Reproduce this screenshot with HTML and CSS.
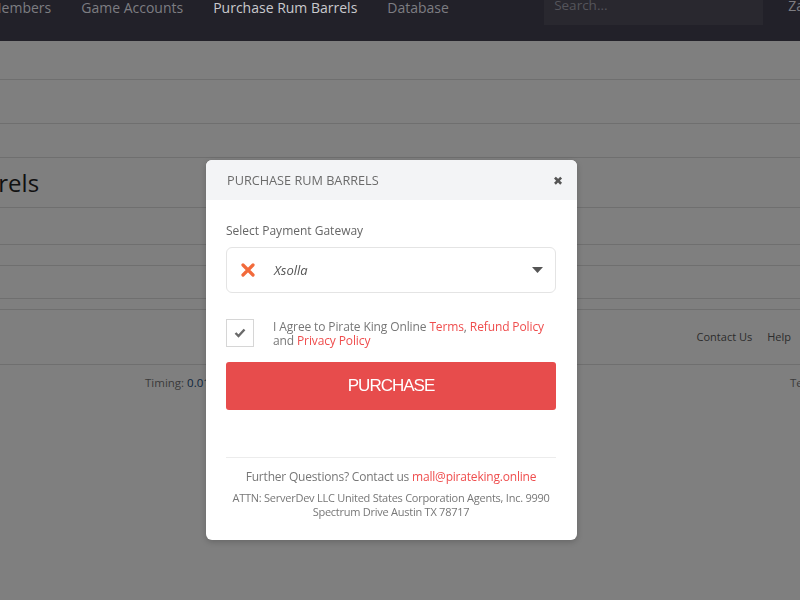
FILE: index.html
```html
<!DOCTYPE html>
<html lang="en">
<head>
    <meta charset="UTF-8">
    <meta name="viewport" content="width=device-width, initial-scale=1.0">
    <title>Purchase Rum Barrels</title>
    <link rel="stylesheet" href="styles.css">
</head>
<body>
    <nav class="topbar">
        <ul class="menu">
            <li><a href="#">Members</a></li>
            <li><a href="#">Game Accounts</a></li>
            <li><a href="#" class="active">Purchase Rum Barrels</a></li>
            <li><a href="#">Database</a></li>
        </ul>
        <input type="text" class="search" placeholder="Search...">
        <a href="#" class="user">Zack</a>
    </nav>

    <div class="page">
        <div class="row r1"></div>
        <div class="row r2"></div>
        <div class="row r3"></div>
        <div class="row r4"><h1>Purchase Rum Barrels</h1></div>
        <div class="row r5"></div>
        <div class="row r6"></div>
        <div class="row r7"></div>
        <div class="row r8"></div>
        <div class="row r9">
            <a href="#">Contact Us</a>
            <a href="#">Help</a>
        </div>
        <div class="stats">
            <span class="timing">Timing: <b>0.01</b></span>
            <span class="terms">Terms</span>
        </div>
    </div>

    <div class="backdrop"></div>

    <div class="modal">
        <div class="modal-head">
            <span>Purchase Rum Barrels</span>
            <span class="close">&#10006;</span>
        </div>
        <div class="modal-body">
            <label>Select Payment Gateway</label>
            <div class="gateway">
                <svg class="x-icon" width="14" height="14" viewBox="0 0 14 14">
                    <path d="M2 2 L12 12 M12 2 L2 12" stroke="#f26a3b" stroke-width="3.2" stroke-linecap="round"/>
                </svg>
                <span class="gw-name">Xsolla</span>
                <svg class="caret" width="11" height="6" viewBox="0 0 11 6">
                    <path d="M0 0 H11 L5.5 6 Z" fill="#555"/>
                </svg>
            </div>
            <div class="agree">
                <div class="checkbox">
                    <svg width="12" height="10" viewBox="0 0 12 10">
                        <path d="M1.5 5 L4.5 8 L10.5 1.5" stroke="#6a6a6a" stroke-width="2.4" fill="none"/>
                    </svg>
                </div>
                <p>I Agree to Pirate King Online <a href="#">Terms</a>, <a href="#">Refund Policy</a> and <a href="#">Privacy Policy</a></p>
            </div>
            <button type="button" class="buy">PURCHASE</button>
            <hr>
            <p class="contact">Further Questions? Contact us <a href="#">mall@pirateking.online</a></p>
            <p class="attn">ATTN: ServerDev LLC United States Corporation Agents, Inc. 9990 Spectrum Drive Austin TX 78717</p>
        </div>
    </div>
</body>
</html>
```

FILE: styles.css
```css
body {
    margin: 0;
    font-family: "Open Sans", Arial, sans-serif;
    background: #fff;
    color: #333;
    overflow: hidden;
}
a {
    text-decoration: none;
}

/* top navigation */
.topbar {
    position: relative;
    z-index: 20;
    height: 41px;
    background: #222129;
    display: flex;
    align-items: flex-start;
    white-space: nowrap;
    overflow: hidden;
}
.menu {
    flex: none;
    list-style: none;
    margin: -4px 0 0 -11px;
    padding: 0;
    display: flex;
    gap: 30px;
}
.menu a {
    color: #7d7d82;
    font-size: 14px;
    line-height: 20px;
}
.menu a.active {
    color: #c9c9cd;
}
.search {
    flex: none;
    margin: -15px 0 0 auto;
    width: 219px;
    height: 40px;
    box-sizing: border-box;
    border: none;
    background: #29282f;
    color: #ccc;
    padding: 0 10px;
    font-family: "Open Sans", Arial, sans-serif;
    font-size: 13.5px;
    outline: none;
}
.search::placeholder {
    color: #55555b;
}
.user {
    flex: none;
    margin: -4px -18px 0 25px;
    color: #7d7d82;
    font-size: 14px;
    line-height: 20px;
}

/* page behind the dialog */
.row {
    border-bottom: 1px solid #dedede;
    box-sizing: border-box;
}
.r1 { height: 39px; }
.r2 { height: 44px; }
.r3 { height: 34px; }
.r4 { height: 50px; }
.r5 { height: 37px; }
.r6 { height: 21px; }
.r7 { height: 33px; }
.r8 { height: 11px; }
.r9 {
    height: 55px;
    display: flex;
    justify-content: flex-end;
    align-items: center;
    gap: 15px;
    padding: 0 9px 2px 0;
}
.r9 a {
    color: #5a5a5a;
    font-size: 11px;
}
h1 {
    margin: 0;
    font-weight: 400;
    font-size: 24px;
    line-height: 50px;
    color: #222;
    margin-left: -208px;
    white-space: nowrap;
}
.stats {
    display: flex;
    justify-content: space-between;
    padding: 10px 0 0 145px;
    font-size: 11.5px;
    color: #777;
}
.timing b {
    font-weight: 400;
    color: #244d7a;
}
.terms {
    margin-right: -20px;
    width: 30px;
}

.backdrop {
    position: fixed;
    inset: 0;
    z-index: 10;
    background: rgba(0,0,0,0.5);
}

/* dialog */
.modal {
    position: absolute;
    z-index: 30;
    left: 206px;
    top: 160px;
    width: 371px;
    height: 380px;
    background: #fff;
    border-radius: 6px;
    overflow: hidden;
    box-shadow: 0 2px 6px rgba(0,0,0,0.2);
}
.modal-head {
    height: 40px;
    background: #f3f4f6;
    display: flex;
    align-items: center;
    justify-content: space-between;
    padding: 0 14px 0 21px;
    font-size: 12.7px;
    text-transform: uppercase;
    color: #6b6b6b;
}
.close {
    font-size: 12px;
    color: #555;
}
.modal-body {
    padding: 22px 21px 0 20px;
}
label {
    display: block;
    font-size: 12px;
    line-height: 18px;
    color: #666;
}
.gateway {
    margin-top: 7px;
    height: 46px;
    border: 1px solid #e4e4e4;
    border-radius: 6px;
    box-sizing: border-box;
    display: flex;
    align-items: center;
    padding: 0 12px 0 14px;
}
.gw-name {
    margin-left: 19px;
    flex: 1;
    font-style: italic;
    font-size: 13px;
    color: #555;
}
.agree {
    margin-top: 26px;
    display: flex;
    align-items: flex-start;
    gap: 19px;
}
.checkbox {
    flex: none;
    width: 28px;
    height: 28px;
    box-sizing: border-box;
    border: 1px solid #d6d6d6;
    display: flex;
    align-items: center;
    justify-content: center;
}
.agree p {
    margin: 0;
    padding-top: 1px;
    font-size: 12px;
    letter-spacing: -0.12px;
    line-height: 14px;
    color: #777;
}
.modal-body a {
    color: #ef4d4d;
}
.buy {
    display: block;
    width: 100%;
    height: 48px;
    margin-top: 14px;
    border: none;
    border-radius: 3px;
    background: #e74c4c;
    color: #fff;
    font-family: "Liberation Sans", Arial, sans-serif;
    font-size: 17px;
    letter-spacing: -1px;
    cursor: pointer;
}
hr {
    margin: 47px 0 0;
    border: none;
    border-top: 1px solid #ececec;
}
.contact {
    margin: 10px 0 0;
    text-align: center;
    font-size: 12px;
    letter-spacing: -0.2px;
    line-height: 17px;
    color: #777;
}
.attn {
    margin: 6px 0 0;
    text-align: center;
    font-size: 11px;
    letter-spacing: -0.25px;
    line-height: 14px;
    color: #777;
}
```
